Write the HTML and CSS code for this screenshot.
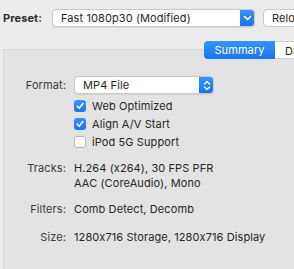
FILE: index.html
```html
<!DOCTYPE html>
<html lang="en">
<head>
    <meta charset="UTF-8">
    <title>Summary</title>
    <link rel="stylesheet" href="styles.css">
</head>
<body>
<div class="toolbar">
    <span class="preset-label">Preset:</span>
    <div class="popup preset-popup">
        <span class="popup-text">Fast 1080p30 (Modified)</span>
        <span class="popup-arrow">
            <svg width="9" height="6" viewBox="0 0 9 6"><path d="M1.5 1.5 L4.5 4.5 L7.5 1.5" fill="none" stroke="#fff" stroke-width="1.5" stroke-linecap="round" stroke-linejoin="round"/></svg>
        </span>
    </div>
    <div class="button">Reload</div>
</div>

<div class="tabs">
    <span class="tab active">Summary</span>
    <span class="tab">Dimensions</span>
</div>

<div class="panel">
    <div class="row">
        <span class="label">Format:</span>
        <div class="popup format-popup">
            <span class="popup-text">MP4 File</span>
            <span class="popup-arrow">
                <svg width="8" height="11" viewBox="0 0 8 11"><path d="M1.5 4 L4 1.5 L6.5 4 M1.5 7 L4 9.5 L6.5 7" fill="none" stroke="#fff" stroke-width="1.3" stroke-linecap="round" stroke-linejoin="round"/></svg>
            </span>
        </div>
    </div>
    <div class="row check-row">
        <span class="label"></span>
        <span class="checkbox checked"><svg width="10" height="10" viewBox="0 0 10 10"><path d="M2.2 5.2 L4.2 7.3 L7.8 2.6" fill="none" stroke="#fff" stroke-width="1.6" stroke-linecap="round" stroke-linejoin="round"/></svg></span>
        <span class="value">Web Optimized</span>
    </div>
    <div class="row check-row">
        <span class="label"></span>
        <span class="checkbox checked"><svg width="10" height="10" viewBox="0 0 10 10"><path d="M2.2 5.2 L4.2 7.3 L7.8 2.6" fill="none" stroke="#fff" stroke-width="1.6" stroke-linecap="round" stroke-linejoin="round"/></svg></span>
        <span class="value">Align A/V Start</span>
    </div>
    <div class="row check-row">
        <span class="label"></span>
        <span class="checkbox"></span>
        <span class="value">iPod 5G Support</span>
    </div>

    <div class="row info tracks">
        <span class="label">Tracks:</span>
        <span class="value">H.264 (x264), 30 FPS PFR<br>AAC (CoreAudio), Mono</span>
    </div>
    <div class="row info filters">
        <span class="label">Filters:</span>
        <span class="value">Comb Detect, Decomb</span>
    </div>
    <div class="row info size">
        <span class="label">Size:</span>
        <span class="value">1280x716 Storage, 1280x716 Display</span>
    </div>
</div>
</body>
</html>
```

FILE: styles.css
```css
* {
    margin: 0;
    padding: 0;
    box-sizing: border-box;
}

html, body {
    margin: 0;
    overflow: hidden;
}

body {
    width: 294px;
    height: 269px;
    background: #ececec;
    font-family: Inter, "Liberation Sans", sans-serif;
    font-feature-settings: "calt" 0;
    font-size: 11px;
    letter-spacing: 0.1px;
    color: #262626;
}

/* Верхняя панель */
.toolbar {
    display: flex;
    align-items: center;
    height: 18px;
    margin-top: 9px;
    padding-left: 3px;
    white-space: nowrap;
}

.preset-label {
    flex-shrink: 0;
    font-weight: 700;
    color: #2e2e2e;
    width: 49px;
}

.popup {
    flex-shrink: 0;
    display: flex;
    align-items: center;
    height: 18px;
    background: #fff;
    border: 1px solid #c9c9c9;
    border-radius: 4px;
    overflow: hidden;
    box-shadow: 0 0.5px 1px rgba(0, 0, 0, 0.08);
}

.popup-text {
    flex: 1;
    padding-left: 8px;
}

.popup-arrow {
    display: flex;
    align-items: center;
    justify-content: center;
    width: 15px;
    height: 18px;
    margin-right: -1px;
    background: linear-gradient(#3d95fa, #1473f0);
}

.preset-popup {
    width: 203px;
}

.button {
    flex-shrink: 0;
    margin-left: 8px;
    height: 18px;
    padding: 0 8px;
    line-height: 16px;
    background: #fff;
    border: 1px solid #c9c9c9;
    border-radius: 4px;
}

/* Вкладки */
.tabs {
    position: relative;
    z-index: 1;
    display: flex;
    margin-top: 14px;
    padding-left: 204px;
    height: 18px;
    white-space: nowrap;
}

.tab {
    flex-shrink: 0;
    height: 18px;
    line-height: 18px;
    padding: 0 9px 0 10px;
    background: #fff;
    border: 0.5px solid #cfcfcf;
    border-left: none;
}

.tab.active {
    width: 71px;
    padding: 0;
    text-align: center;
    color: #fff;
    background: linear-gradient(#3a92fa, #1675f2);
    border: none;
    border-radius: 4px 0 0 4px;
}

/* Содержимое вкладки */
.panel {
    margin-top: -10px;
    margin-left: 3px;
    height: 221px;
    background: #e3e3e3;
    border: 1px solid #d4d4d4;
    border-right: none;
    border-bottom: none;
    padding-top: 26px;
}

.row {
    display: flex;
    align-items: center;
    white-space: nowrap;
}

.label {
    width: 62px;
    margin-right: 8px;
    text-align: right;
    color: #3a3a3a;
    flex-shrink: 0;
}

.format-popup {
    width: 140px;
}

.check-row {
    height: 18px;
}

.row:nth-child(2) {
    margin-top: 3px;
}

.checkbox {
    display: flex;
    align-items: center;
    justify-content: center;
    width: 12px;
    height: 12px;
    margin-right: 6px;
    background: #fff;
    border: 1px solid #b9b9b9;
    border-radius: 3px;
}

.checkbox.checked {
    background: linear-gradient(#3a92fa, #1675f2);
    border: none;
}

.info {
    align-items: flex-start;
    line-height: 15px;
}

.tracks {
    margin-top: 10px;
}

.filters {
    margin-top: 11px;
}

.size {
    margin-top: 13px;
}
```
